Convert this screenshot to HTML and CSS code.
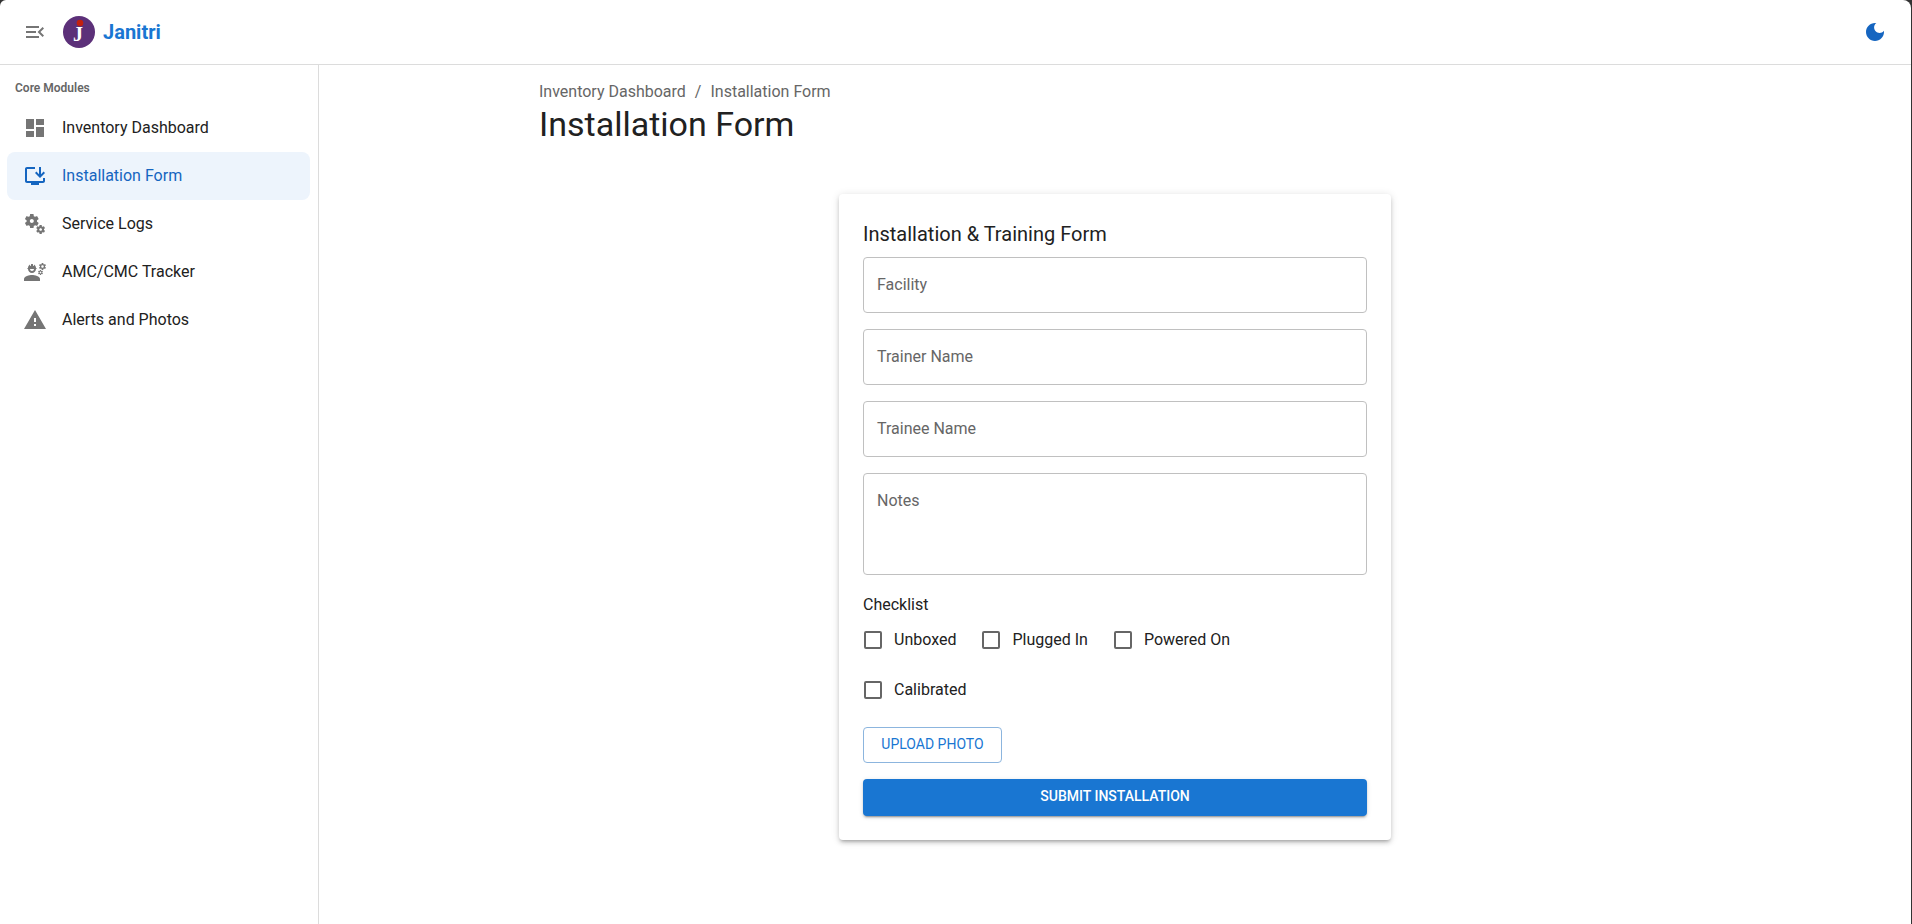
FILE: index.html
```html
<!DOCTYPE html>
<html lang="en">
<head>
<meta charset="utf-8">
<meta name="viewport" content="width=device-width, initial-scale=1">
<title>Installation Form</title>
<link rel="stylesheet" href="styles.css">
</head>
<body>
<div class="app">
  <header class="topbar">
    <button class="icon-button" type="button" aria-label="Collapse menu">
      <svg class="icon" viewBox="0 0 24 24"><path d="M3 18h13v-2H3v2zM3 13h10v-2H3v2zm0-7v2h13V6H3zm18 9.59L17.42 12 21 8.41 19.59 7l-5 5 5 5L21 15.59z"/></svg>
    </button>
    <a class="brand" href="#">
      <svg class="logo" viewBox="0 0 32 32" aria-hidden="true">
        <circle cx="16" cy="16" r="16" fill="#5c3079"/>
        <text class="logo-letter" x="15" y="25" text-anchor="middle">J</text>
        <circle cx="17" cy="7" r="3.3" fill="#c2200f"/>
      </svg>
      <span class="brand-name">Janitri</span>
    </a>
    <button class="icon-button theme-toggle" type="button" aria-label="Switch to dark mode">
      <svg class="icon" viewBox="0 0 24 24"><path d="M12 3c-4.97 0-9 4.03-9 9s4.03 9 9 9 9-4.03 9-9c0-.46-.04-.92-.1-1.36-.98 1.37-2.58 2.26-4.4 2.26-2.98 0-5.4-2.42-5.4-5.4 0-1.81.89-3.42 2.26-4.4-.44-.06-.9-.1-1.36-.1z"/></svg>
    </button>
  </header>

  <div class="body">
    <nav class="sidebar" aria-label="Core Modules">
      <h2 class="nav-heading">Core Modules</h2>
      <ul class="nav-list">
        <li><a class="nav-item" href="#">
          <svg class="icon" viewBox="0 0 24 24"><path d="M3 13h8V3H3v10zm0 8h8v-6H3v6zm10 0h8V11h-8v10zm0-18v6h8V3h-8z"/></svg>
          <span>Inventory Dashboard</span></a></li>
        <li><a class="nav-item selected" href="#" aria-current="page">
          <svg class="icon" viewBox="0 0 24 24"><path d="M20 17H4V5h8V3H4c-1.11 0-2 .89-2 2v12c0 1.1.89 2 2 2h4v2h8v-2h4c1.1 0 2-.9 2-2v-3h-2z"/><path d="m17 14 5-5-1.41-1.41L18 10.17V3h-2v7.17l-2.59-2.58L12 9z"/></svg>
          <span>Installation Form</span></a></li>
        <li><a class="nav-item" href="#">
          <svg class="icon" viewBox="0 0 24 24"><path d="M14.17 13.71l1.4-2.42c.09-.15.05-.34-.08-.45l-1.48-1.16c.03-.22.05-.45.05-.68s-.02-.46-.05-.69l1.48-1.16c.13-.11.17-.3.08-.45l-1.4-2.42c-.09-.15-.27-.21-.43-.15l-1.74.7c-.36-.28-.75-.51-1.18-.69l-.26-1.85C10.54 2.13 10.38 2 10.21 2h-2.8c-.17 0-.33.13-.35.3L6.8 4.15c-.42.18-.82.41-1.18.69l-1.74-.7c-.16-.06-.34 0-.43.15l-1.4 2.42c-.09.15-.05.34.08.45l1.48 1.16c-.03.22-.05.45-.05.68s.02.46.05.69l-1.48 1.16c-.13.11-.17.3-.08.45l1.4 2.42c.09.15.27.21.43.15l1.74-.7c.36.28.76.51 1.18.69l.26 1.85c.03.16.18.29.35.29h2.8c.17 0 .33-.13.35-.3l.26-1.85c.42-.18.82-.41 1.18-.69l1.74.7c.16.06.34 0 .43-.15zM8.81 11c-1.1 0-2-.9-2-2s.9-2 2-2 2 .9 2 2-.9 2-2 2z"/><path d="M21.92 18.67l-.96-.74c.02-.14.04-.29.04-.44 0-.15-.01-.3-.04-.44l.95-.74c.08-.07.11-.19.05-.29l-.9-1.55c-.05-.1-.17-.13-.28-.1l-1.11.45c-.23-.18-.48-.33-.76-.44l-.17-1.18c-.01-.12-.11-.2-.21-.2h-1.79c-.11 0-.21.08-.22.19l-.17 1.18c-.27.12-.53.26-.76.44l-1.11-.45c-.1-.04-.22 0-.28.1l-.9 1.55c-.05.1-.04.22.05.29l.95.74c-.02.14-.03.29-.03.44 0 .15.01.3.03.44l-.95.74c-.08.07-.11.19-.05.29l.9 1.55c.05.1.17.13.28.1l1.11-.45c.23.18.48.33.76.44l.17 1.18c.02.11.11.19.22.19h1.79c.11 0 .21-.08.22-.19l.17-1.18c.27-.12.53-.26.75-.44l1.12.45c.1.04.22 0 .28-.1l.9-1.55c.06-.09.03-.21-.05-.28zm-4.29.16c-.74 0-1.35-.6-1.35-1.35s.6-1.35 1.35-1.35 1.35.6 1.35 1.35-.61 1.35-1.35 1.35z"/></svg>
          <span>Service Logs</span></a></li>
        <li><a class="nav-item" href="#">
          <svg class="icon" viewBox="0 0 24 24"><path d="M9 15c-2.67 0-8 1.34-8 4v2h16v-2c0-2.66-5.33-4-8-4z"/><path d="M4.74,9H5c0,2.21,1.79,4,4,4s4-1.79,4-4h0.26c0.27,0,0.49-0.22,0.49-0.49V8.49c0-0.27-0.22-0.49-0.49-0.49H13c0-1.48-0.81-2.75-2-3.45V5.5C11,5.78,10.78,6,10.5,6S10,5.78,10,5.5V4.14C9.68,4.06,9.35,4,9,4S8.32,4.06,8,4.14V5.5C8,5.78,7.78,6,7.5,6S7,5.78,7,5.5V4.55C5.81,5.25,5,6.52,5,8H4.74C4.47,8,4.25,8.22,4.25,8.49v0.03C4.25,8.78,4.47,9,4.74,9z M11,9c0,1.1-0.9,2-2,2s-2-0.9-2-2H11z"/><path d="M21.98,6.23l0.93-0.83l-0.75-1.3l-1.19,0.39c-0.14-0.11-0.3-0.2-0.47-0.27L20.25,3h-1.5L18.5,4.22c-0.17,0.07-0.33,0.16-0.48,0.27L16.84,4.1l-0.75,1.3l0.93,0.83C17,6.4,17,6.58,17.02,6.75l-0.93,0.85l0.75,1.3l1.2-0.38c0.13,0.1,0.28,0.18,0.43,0.25L18.75,10h1.5l0.27-1.22c0.16-0.07,0.3-0.15,0.44-0.25l1.19,0.38l0.75-1.3l-0.93-0.85C22,6.57,21.99,6.4,21.98,6.23z M19.5,7.75c-0.69,0-1.25-0.56-1.25-1.25s0.56-1.25,1.25-1.25s1.25,0.56,1.25,1.25S20.19,7.75,19.5,7.75z"/><path d="M19.4,10.79l-0.85,0.28c-0.1-0.08-0.21-0.14-0.33-0.19L18.04,10h-1.07l-0.18,0.87c-0.12,0.05-0.24,0.12-0.34,0.19l-0.84-0.28l-0.54,0.93l0.66,0.59c-0.01,0.13-0.01,0.25,0,0.37l-0.66,0.61l0.54,0.93l0.86-0.27c0.1,0.07,0.2,0.13,0.31,0.18L16.96,15h1.07l0.19-0.87c0.11-0.05,0.22-0.11,0.32-0.18l0.85,0.27l0.54-0.93l-0.66-0.61c0.01-0.13,0-0.25-0.01-0.37l0.66-0.59L19.4,10.79z M17.5,13.39c-0.49,0-0.89-0.4-0.89-0.89s0.4-0.89,0.89-0.89s0.89,0.4,0.89,0.89S17.99,13.39,17.5,13.39z"/></svg>
          <span>AMC/CMC Tracker</span></a></li>
        <li><a class="nav-item" href="#">
          <svg class="icon" viewBox="0 0 24 24"><path d="M1 21h22L12 2 1 21zm12-3h-2v-2h2v2zm0-4h-2v-4h2v4z"/></svg>
          <span>Alerts and Photos</span></a></li>
      </ul>
    </nav>

    <main class="main">
      <div class="container">
        <nav class="breadcrumbs" aria-label="Breadcrumb">
          <a href="#">Inventory Dashboard</a>
          <span aria-hidden="true">/</span>
          <span>Installation Form</span>
        </nav>
        <h1 class="page-title">Installation Form</h1>
      </div>

      <form class="card">
        <h2 class="card-title">Installation &amp; Training Form</h2>
        <div class="stack">
          <div class="field">
            <input id="facility" type="text">
            <label for="facility">Facility</label>
          </div>
          <div class="field">
            <input id="trainer" type="text">
            <label for="trainer">Trainer Name</label>
          </div>
          <div class="field">
            <input id="trainee" type="text">
            <label for="trainee">Trainee Name</label>
          </div>
          <div class="field">
            <textarea id="notes" rows="3"></textarea>
            <label for="notes">Notes</label>
          </div>
          <fieldset class="checklist">
            <legend>Checklist</legend>
            <div class="checks">
              <label class="check"><input type="checkbox">Unboxed</label>
              <label class="check"><input type="checkbox">Plugged In</label>
              <label class="check"><input type="checkbox">Powered On</label>
              <label class="check"><input type="checkbox">Calibrated</label>
            </div>
          </fieldset>
          <button class="button outlined" type="button">Upload Photo</button>
          <button class="button contained" type="submit">Submit Installation</button>
        </div>
      </form>
    </main>
  </div>
</div>
</body>
</html>
```
FILE: styles.css
```css
:root {
  --text: #212121;
  --muted: #666;
  --icon: #757575;
  --line: #dcdcdc;
  --primary: #1976d2;
  --primary-dark: #1565c0;
}

* {
  box-sizing: border-box;
}

html {
  background: #333;
}

body {
  margin: 0;
  font: 400 16px/24px Roboto, "Liberation Sans", sans-serif;
  color: var(--text);
}

h1, h2, ul {
  margin: 0;
  padding: 0;
  font-weight: 400;
}

a {
  color: inherit;
  text-decoration: none;
}

input, textarea, button {
  font: inherit;
  color: inherit;
}

.app {
  display: flex;
  flex-direction: column;
  min-height: 100vh;
  margin-right: 1px;
  background: #fff;
  border-radius: 6px 8px 0 0;
}

.icon {
  display: block;
  flex: none;
  width: 24px;
  height: 24px;
  fill: currentColor;
}

/* Top bar */
.topbar {
  display: flex;
  align-items: center;
  height: 65px;
  padding: 0 16px 1px 15px;
  border-bottom: 1px solid var(--line);
}

.icon-button {
  padding: 8px;
  border: 0;
  border-radius: 50%;
  background: none;
  color: var(--icon);
}

.theme-toggle {
  margin-left: auto;
  color: var(--primary-dark);
}

.brand {
  display: flex;
  align-items: center;
  gap: 8px;
  margin-left: 8px;
}

.logo {
  display: block;
  width: 32px;
  height: 32px;
}

.logo-letter {
  font: 700 20px "Liberation Serif", serif;
  fill: #fff;
}

.brand-name {
  font-size: 20px;
  font-weight: 700;
  color: var(--primary);
}

.body {
  display: flex;
  flex: 1;
}

/* Sidebar */
.sidebar {
  flex: none;
  width: 319px;
  padding: 3px 8px 0 7px;
  border-right: 1px solid var(--line);
}

.nav-heading {
  padding: 0 8px;
  font-size: 12px;
  font-weight: 600;
  line-height: 40px;
  color: var(--muted);
}

.nav-list {
  margin-top: -4px;
  list-style: none;
}

.nav-item {
  display: flex;
  align-items: center;
  gap: 15px;
  height: 48px;
  padding: 0 16px;
  border-radius: 8px;
}

.nav-item .icon {
  color: var(--icon);
}

.nav-item.selected {
  background: #edf4fc;
}

.nav-item.selected,
.nav-item.selected .icon {
  color: var(--primary-dark);
}

/* Main area */
.main {
  flex: 1;
  min-width: 0;
  padding: 15px 0 40px;
}

.container {
  max-width: 1200px;
  margin: 0 auto;
  padding: 0 24px;
}

.breadcrumbs {
  display: flex;
  gap: 9px;
  color: var(--muted);
}

.page-title {
  font-size: 34px;
  line-height: 40px;
}

/* Form card */
.card {
  max-width: 552px;
  margin: 50px auto 0;
  padding: 24px;
  border-radius: 4px;
  background: #fff;
  box-shadow: 0 3px 3px -2px rgba(0, 0, 0, .2), 0 3px 4px 0 rgba(0, 0, 0, .14), 0 1px 8px 0 rgba(0, 0, 0, .12);
}

.card-title {
  margin-bottom: 7px;
  font-size: 20px;
  line-height: 32px;
}

.stack {
  display: flex;
  flex-direction: column;
  gap: 16px;
}

.field {
  position: relative;
}

.field input,
.field textarea {
  display: block;
  width: 100%;
  padding: 16px 13px;
  border: 1px solid #c0c0c0;
  border-radius: 4px;
  background: none;
  resize: none;
}

.field input {
  height: 56px;
}

.field textarea {
  height: 102px;
}

/* Resting label drawn inside its empty control */
.field label {
  position: absolute;
  top: 16px;
  left: 14px;
  color: var(--muted);
  pointer-events: none;
}

.field input:focus + label,
.field textarea:focus + label {
  visibility: hidden;
}

.checklist {
  margin: 0;
  padding: 0;
  border: 0;
}

.checklist legend {
  padding: 0;
  line-height: 28px;
}

.checks {
  display: flex;
  flex-wrap: wrap;
  gap: 8px;
}

.check {
  display: flex;
  align-items: center;
  gap: 12px;
  height: 42px;
  padding-right: 17px;
}

.check input {
  appearance: none;
  width: 18px;
  height: 18px;
  margin: 0 0 0 1px;
  border: 2px solid var(--muted);
  border-radius: 2px;
}

.check input:checked {
  border-color: var(--primary);
  background: var(--primary);
}

.button {
  padding: 0 15px 2px;
  border-radius: 4px;
  font-size: 14px;
  text-transform: uppercase;
}

.outlined {
  align-self: flex-start;
  min-width: 139px;
  height: 36px;
  border: 1px solid #8cb5de;
  background: none;
  color: var(--primary);
}

.contained {
  height: 37px;
  padding-bottom: 3px;
  border: 0;
  background: var(--primary);
  color: #fff;
  font-weight: 500;
  box-shadow: 0 3px 1px -2px rgba(0, 0, 0, .2), 0 2px 2px 0 rgba(0, 0, 0, .14), 0 1px 5px 0 rgba(0, 0, 0, .12);
}
```
